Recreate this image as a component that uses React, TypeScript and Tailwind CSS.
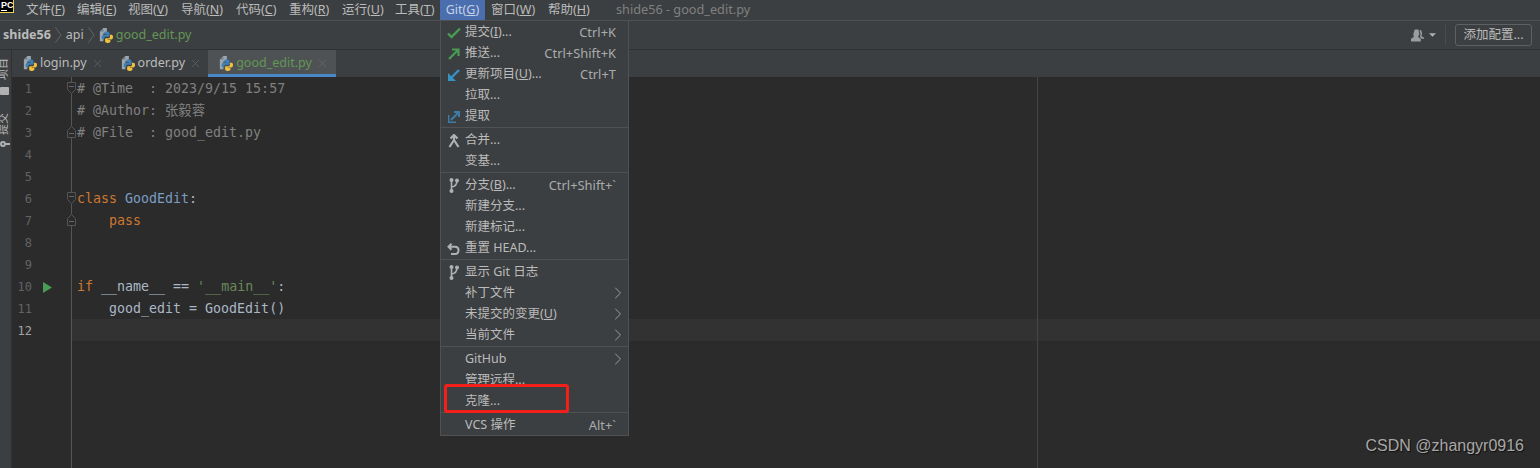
import type { ReactNode } from "react";
import { ChevronRight, X } from "lucide-react";

const uiFont = "font-['Noto_Sans','Noto_Sans_CJK_SC',sans-serif]";

const topMenu: [string, string, string][] = [
  ["文件(", "F", "w-[51px]"],
  ["编辑(", "E", "w-[51px]"],
  ["视图(", "V", "w-[53px]"],
  ["导航(", "N", "w-[55px]"],
  ["代码(", "C", "w-[53px]"],
  ["重构(", "R", "w-[53px]"],
  ["运行(", "U", "w-[53px]"],
  ["工具(", "T", "w-[45px]"],
];

const PyIcon = () => (
  <svg width="14" height="15" viewBox="0 0 16 17" className="mr-[3px] shrink-0">
    <path d="M1 4l4-4h4v6H5v9H1z" fill="#9aa7b0" />
    <path d="M5 1v3H1" fill="#6e7a83" />
    <path d="M9 4c2 0 3 .6 3 2v2.500c0 1-.8 1.500-1.800 1.500H7.500C6.700 10 6 10.700 6 11.500V13H4.800C3.500 13 3 12 3 10.500S3.600 8 4.800 8H9V7.400H6V5.500C6 4.400 7 4 9 4z" fill="#3f7fb5" />
    <path d="M12.500 7.500H14c1.300 0 2 1 2 2.700S15.300 13 14 13h-4v.6h3v1.800c0 1.100-1.400 1.600-2.700 1.600S7 16.400 7 15.300v-2.500c0-1 .8-1.300 1.500-1.300h2.800c.7 0 1.200-.6 1.200-1.300z" fill="#f2c23c" />
  </svg>
);

const Crumb = () => (
  <svg width="7" height="16" viewBox="0 0 7 16" className="mx-[4px] shrink-0" fill="none" stroke="#626567">
    <path d="M.5.5L6 8 .5 15.500" />
  </svg>
);

const Tab = ({ name, active }: { name: string; active?: boolean }) => (
  <div
    className={
      active
        ? "flex h-full items-center border-b-[3px] border-[#4a88c7] bg-[#4e5254] pl-[11px] pr-[7px] pt-[2px] text-[#629755]"
        : "flex h-full items-center pl-[11px] pr-[6px] text-[#bbbbbb]"
    }
  >
    <PyIcon />
    <span className="text-[12.500px]">{name}</span>
    <X size={13} strokeWidth={1.100} className="ml-[4px] text-[#6e6e6e]" />
  </div>
);

const C = ({ c, children }: { c: string; children: ReactNode }) => <span className={c}>{children}</span>;

const code: ReactNode[] = [
  <C c="text-[#808080]"># @Time  : 2023/9/15 15:57</C>,
  <C c="text-[#808080]"># @Author: 张毅蓉</C>,
  <C c="text-[#808080]"># @File  : good_edit.py</C>,
  "",
  "",
  <>
    <C c="text-[#cc7832]">class </C>
    <C c="text-[#7a9ec2]">GoodEdit</C>:
  </>,
  <C c="text-[#cc7832]">{"    pass"}</C>,
  "",
  "",
  <>
    <C c="text-[#cc7832]">if </C>
    <C c="text-[#a9b7c6]">__name__ == </C>
    <C c="text-[#6a8759]">'__main__'</C>:
  </>,
  <C c="text-[#a9b7c6]">{"    good_edit = GoodEdit()"}</C>,
  "",
];

const Fold = ({ open }: { open: boolean }) => (
  <svg width="9" height="12" viewBox="0 0 9 12" className="absolute left-[55px] top-[5px] bg-[#2b2b2b]">
    <path
      d={open ? "M.5.5h8v7L4.500 11.500 .5 7.500z" : "M.5 11.500h8v-7L4.500 .5 .5 4.500z"}
      fill="none"
      stroke="#555555"
    />
    <path d={open ? "M2 4.500h5" : "M2 7.500h5"} stroke="#666666" />
  </svg>
);

const Check = () => (
  <svg width="14" height="12" viewBox="0 0 14 12">
    <path d="M1 6.500l3.500 3.500L13 1.500" fill="none" stroke="#499c54" strokeWidth="2.400" />
  </svg>
);
const Push = () => (
  <svg width="12" height="12" viewBox="0 0 12 12">
    <path d="M1 11L10 2M4 1.500h6.500V8" fill="none" stroke="#499c54" strokeWidth="2.200" />
  </svg>
);
const Update = () => (
  <svg width="12" height="12" viewBox="0 0 12 12">
    <path d="M11 1L3 9" stroke="#3592c4" strokeWidth="2.400" />
    <path d="M0 4v8h8z" fill="#3592c4" />
  </svg>
);
const Fetch = () => (
  <svg width="12" height="12" viewBox="0 0 12 12" fill="none" stroke="#3d7ea6">
    <path d="M.7 4v7.300H8" strokeWidth="1.400" />
    <path d="M3 9l7-7M6 1h5v5" strokeWidth="2" />
  </svg>
);
const Merge = () => (
  <svg width="12" height="14" viewBox="0 0 12 14" fill="none" stroke="#afb1b3" strokeWidth="2.200">
    <path d="M6 1v5L1.500 13M6 6l4.500 7M2.500 4.500L6 1l3.500 3.500" />
  </svg>
);
const Branch = () => (
  <svg width="10" height="15" viewBox="0 0 10 15" fill="#afb1b3">
    <circle cx="2.500" cy="2" r="2" />
    <circle cx="2.500" cy="13" r="2" />
    <circle cx="8" cy="2.500" r="2" />
    <path d="M2.500 2v11M2.500 9C7 8.500 8 6 8 2.500" fill="none" stroke="#afb1b3" strokeWidth="1.600" />
  </svg>
);
const Reset = () => (
  <svg width="13" height="12" viewBox="0 0 13 12" fill="none" stroke="#afb1b3" strokeWidth="2">
    <path d="M4.500.7L1.500 3.700l3 3M1.500 3.700H8c2 0 3.500 1.300 3.500 3.500S10 11 8 11H4" />
  </svg>
);

type Row = { label: ReactNode; key?: string; icon?: ReactNode; arrow?: boolean } | "sep";

const rows: Row[] = [
  { label: <>提交(<u>I</u>)...</>, key: "Ctrl+K", icon: <Check /> },
  { label: "推送...", key: "Ctrl+Shift+K", icon: <Push /> },
  { label: <>更新项目(<u>U</u>)...</>, key: "Ctrl+T", icon: <Update /> },
  { label: "拉取..." },
  { label: "提取", icon: <Fetch /> },
  "sep",
  { label: "合并...", icon: <Merge /> },
  { label: "变基..." },
  "sep",
  { label: <>分支(<u>B</u>)...</>, key: "Ctrl+Shift+`", icon: <Branch /> },
  { label: "新建分支..." },
  { label: "新建标记..." },
  { label: "重置 HEAD...", icon: <Reset /> },
  "sep",
  { label: "显示 Git 日志", icon: <Branch /> },
  { label: "补丁文件", arrow: true },
  { label: <>未提交的变更(<u>U</u>)</>, arrow: true },
  { label: "当前文件", arrow: true },
  "sep",
  { label: "GitHub", arrow: true },
  { label: "管理远程..." },
  { label: "克隆..." },
  "sep",
  { label: "VCS 操作", key: "Alt+`" },
];

const GitMenu = () => (
  <div className="absolute left-[440px] top-[20px] w-[189px] border border-[#515151] bg-[#3c3f41] text-[12.500px] text-[#bbbbbb]">
    {rows.map((row, i) =>
      row === "sep" ? (
        <div key={i} className="flex h-[3px] items-center">
          <div className="h-px w-full bg-[#515151]" />
        </div>
      ) : (
        <div key={i} className="flex h-[21px] items-center pt-[2px]">
          <div className="flex w-[24px] shrink-0 justify-center pl-[1px]">{row.icon}</div>
          <div className="flex-1 whitespace-nowrap">{row.label}</div>
          {row.key && <div className="mr-[12px] whitespace-nowrap text-[12.900px] text-[#a9abad]">{row.key}</div>}
          {row.arrow && <ChevronRight size={20} strokeWidth={1.200} className="mb-[2px] text-[#9a9da0]" />}
        </div>
      ),
    )}
    <div className="absolute left-[3px] top-[363px] h-[29px] w-[125px] rounded-[3px] border-[3px] border-[#f3201a]" />
  </div>
);

const folds = [
  { open: true, top: "top-0" },
  { open: false, top: "top-[44px]" },
  { open: true, top: "top-[110px]" },
  { open: false, top: "top-[132px]" },
];

export default function App() {
  return (
    <div className={`relative flex h-[468px] w-[1540px] flex-col overflow-hidden bg-[#2b2b2b] ${uiFont}`}>
      <header className="flex h-[21px] shrink-0 items-center border-b border-[#515151] bg-[#3c3f41] text-[12.500px] text-[#bbbbbb]">
        <div className="flex h-[13px] w-[14px] shrink-0 flex-col items-start self-start border-b border-r border-[#e8d44d] bg-black pl-[1px] font-['Liberation_Sans',sans-serif] text-[9px] font-bold leading-[10px] text-white">
          PC
          <div className="h-px w-[6px] bg-white" />
        </div>
        <div className="ml-[12px] flex">
          {topMenu.map(([name, key, width]) => (
            <span key={name} className={`${width} whitespace-nowrap`}>
              {name}
              <u>{key}</u>)
            </span>
          ))}
        </div>
        <span className="flex h-full w-[45px] shrink-0 items-center justify-center bg-[#4b6eaf] text-[#c5d2e4]">
          Git(<u>G</u>)
        </span>
        <span className="ml-[6px] w-[57px] whitespace-nowrap">
          窗口(<u>W</u>)
        </span>
        <span className="w-[68px] whitespace-nowrap">
          帮助(<u>H</u>)
        </span>
        <span className="text-[12.700px] text-[#808080]">shide56 - good_edit.py</span>
      </header>

      <nav className="flex h-[29px] shrink-0 items-center border-b border-[#323232] bg-[#3c3f41] pl-[3px] text-[12.500px] text-[#bbbbbb]">
        <span className="font-bold">shide56</span>
        <Crumb />
        <span>api</span>
        <Crumb />
        <PyIcon />
        <span className="text-[#629755]">good_edit.py</span>
        <div className="ml-auto flex items-center">
          <svg width="14" height="13" viewBox="0 0 15 13" fill="#9a9da0">
            <path d="M4 0h4l1 5-1.500 3 3 2v3H0v-3l3-2L2.500 5z" />
            <path d="M9 1h2l1 4-1 2 3 2v1h-2.500L9.500 8l.8-3z" />
          </svg>
          <svg width="7" height="4" viewBox="0 0 8 4" className="ml-[4px]" fill="#afb1b3">
            <path d="M0 0h8L4 4z" />
          </svg>
          <div className="ml-[9px] h-[20px] w-px bg-[#4a4c4e]" />
          <div className="ml-[9px] mr-[8px] flex h-[22px] w-[77px] items-center justify-center rounded-[3px] border border-[#5e6163]">
            添加配置...
          </div>
        </div>
      </nav>

      <div className="flex min-h-0 flex-1">
        <aside className="w-[12px] shrink-0 overflow-hidden border-r border-[#323232] bg-[#3c3f41] text-[#bbbbbb]">
          <div className="ml-[-3px] mt-[8px] flex flex-col items-start">
            <span className="rotate-180 text-[11px] leading-[11px] [text-orientation:sideways] [writing-mode:vertical-rl]">项目</span>
            <div className="ml-[3px] mt-[7px] h-[8px] w-[9px] rounded-[1px] bg-[#afb1b3]" />
            <span className="mt-[18px] rotate-180 text-[11px] leading-[11px] [text-orientation:sideways] [writing-mode:vertical-rl]">提交</span>
            <div className="ml-[3px] mt-[6px] flex items-center">
              <div className="size-[6px] rounded-full border-2 border-[#afb1b3]" />
              <div className="h-[2px] w-[4px] bg-[#afb1b3]" />
            </div>
          </div>
        </aside>

        <div className="flex min-w-0 flex-1 flex-col">
          <div className="flex h-[27px] shrink-0 items-stretch bg-[#3c3f41]">
            <Tab name="login.py" />
            <Tab name="order.py" />
            <Tab name="good_edit.py" active />
          </div>

          <main className="relative min-h-0 flex-1 font-['DejaVu_Sans_Mono','Noto_Sans_CJK_SC',monospace] text-[13.300px] text-[#a9b7c6]">
            {code.map((line, i) => (
              <div key={i} className="relative flex h-[22px]">
                <div className="w-[60px] shrink-0 pt-[2px] leading-[20px]">
                  <div
                    className={
                      i === 11
                        ? "w-[20px] text-right text-[12px] text-[#a4a3a3]"
                        : "w-[20px] text-right text-[12px] text-[#606366]"
                    }
                  >
                    {i + 1}
                  </div>
                </div>
                <div
                  className={
                    i === 11
                      ? "flex-1 whitespace-pre bg-[#323232] pl-[5px] pt-[2px] leading-[20px]"
                      : "flex-1 whitespace-pre pl-[5px] pt-[2px] leading-[20px]"
                  }
                >
                  {line}
                </div>
              </div>
            ))}
            <div className="absolute bottom-0 left-[59px] top-0 w-px bg-[#555555]" />
            <div className="absolute bottom-0 left-[1025px] top-0 w-px bg-[#464646]" />
            {folds.map((f) => (
              <div key={f.top} className={`absolute left-0 ${f.top}`}>
                <Fold open={f.open} />
              </div>
            ))}
            <svg width="9" height="11" viewBox="0 0 9 11" className="absolute left-[31px] top-[205px]">
              <path d="M0 0l9 5.500L0 11z" fill="#499c54" />
            </svg>
          </main>
        </div>
      </div>

      <GitMenu />

      <div className="absolute bottom-[10px] right-[16px] font-['Liberation_Sans',sans-serif] text-[16px] text-[#a8a8a8] [text-shadow:1px_1px_1px_#111111]">
        CSDN @zhangyr0916
      </div>
    </div>
  );
}
